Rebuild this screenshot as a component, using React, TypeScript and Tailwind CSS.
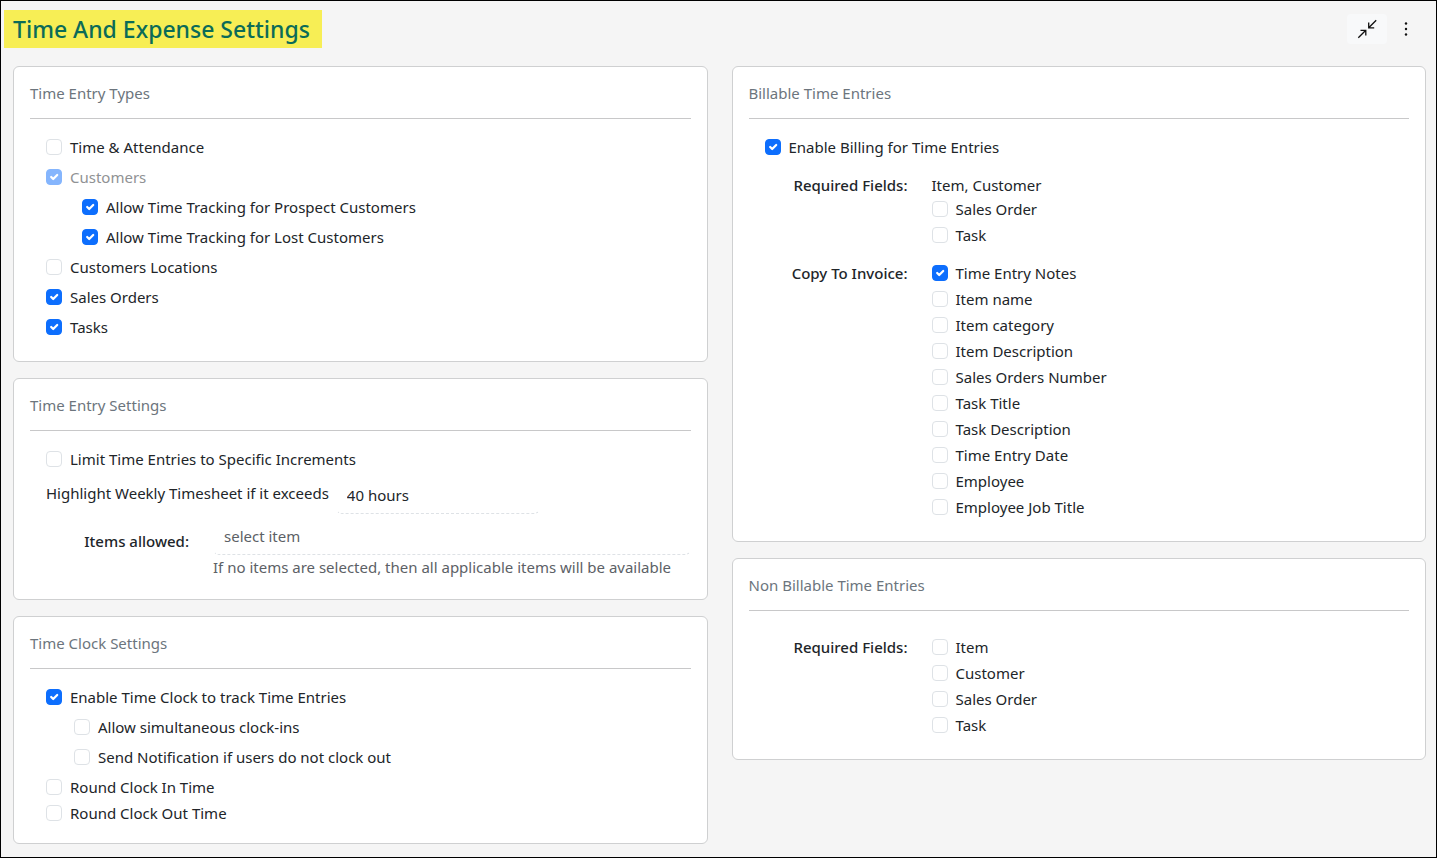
import React from "react";
import { clsx } from "clsx";

interface CheckProps {
  label: string;
  checked?: boolean;
  disabled?: boolean;
  className?: string;
}

const Check = ({ label, checked = false, disabled = false, className }: CheckProps) => {
  const [on, setOn] = React.useState(checked);

  return (
    <label
      className={clsx(
        "flex h-6 items-center gap-2",
        disabled && "text-[#909294]",
        className
      )}
    >
      <span className={clsx("relative flex shrink-0", disabled && "opacity-50")}>
        <input
          type="checkbox"
          checked={on}
          disabled={disabled}
          onChange={() => setOn(!on)}
          className="size-4 appearance-none rounded border border-[#dee2e6] bg-white checked:border-[#0d6efd] checked:bg-[#0d6efd]"
        />
        {on && (
          <svg viewBox="0 0 20 20" className="pointer-events-none absolute inset-0 size-4" aria-hidden="true">
            <path
              d="M6.5 10l2.5 2.5 5-5"
              fill="none"
              stroke="#fff"
              strokeWidth="2.8"
              strokeLinecap="round"
              strokeLinejoin="round"
            />
          </svg>
        )}
      </span>
      {label}
    </label>
  );
};

interface CardProps {
  title: string;
  children: React.ReactNode;
}

const Card = ({ title, children }: CardProps) => (
  <section className="rounded-md border border-[#cfd0d1] bg-white px-4 pb-[18px]">
    <h2 className="border-b border-[#c8c8c9] pt-3.5 pb-[13px] text-[#6c757d]">{title}</h2>
    <div className="px-4 pt-4">{children}</div>
  </section>
);

interface FieldGroupProps {
  label: string;
  children: React.ReactNode;
  className?: string;
}

const FieldGroup = ({ label, children, className }: FieldGroupProps) => (
  <div role="group" aria-label={label} className={clsx("flex gap-6", className)}>
    <div className="w-[143px] shrink-0 text-right font-medium">{label}</div>
    <div className="flex flex-col gap-0.5">{children}</div>
  </div>
);

const invoiceFields = [
  "Item name",
  "Item category",
  "Item Description",
  "Sales Orders Number",
  "Task Title",
  "Task Description",
  "Time Entry Date",
  "Employee",
  "Employee Job Title",
];

export default function App() {
  return (
    <div className="min-h-screen border border-black bg-[#f5f5f5] font-['Noto_Sans',sans-serif] text-[15px] leading-6 text-[#212529]">
      <header className="flex items-center justify-between pt-[9px] pr-5 pb-[18px] pl-[3px]">
        <h1 className="bg-[#f7ee55] pr-3 pl-[9px] text-[23px] leading-[38px] font-medium text-[#0b6b58]">
          Time And Expense Settings
        </h1>
        <div className="flex items-center gap-[9px]">
          <button
            type="button"
            aria-label="Collapse"
            className="flex h-[30px] w-10 items-center justify-center rounded bg-[#f8f9fa]"
          >
            <svg viewBox="0 0 20 20" className="size-5" fill="none" stroke="#111" strokeWidth="1.3" aria-hidden="true">
              <path d="M19.2 1.3l-7.5 7.5M11.7 3.5v5.3h5.5" />
              <path d="M1.3 18.8l7.5-7.5M3.5 11.3h5.3v5.3" />
            </svg>
          </button>
          <button type="button" aria-label="More options" className="flex h-[30px] w-5 items-center justify-center">
            <svg viewBox="0 0 16 16" className="size-4" fill="#111" aria-hidden="true">
              <circle cx="8" cy="2.5" r="1.2" />
              <circle cx="8" cy="8" r="1.2" />
              <circle cx="8" cy="13.5" r="1.2" />
            </svg>
          </button>
        </div>
      </header>

      <main className="grid grid-cols-2 items-start gap-6 pr-2.5 pb-3 pl-3">
        <div className="flex flex-col gap-4">
          <Card title="Time Entry Types">
            <div className="flex flex-col gap-1.5 pb-1">
              <Check label="Time & Attendance" />
              <Check label="Customers" checked disabled />
              <Check label="Allow Time Tracking for Prospect Customers" checked className="ml-9" />
              <Check label="Allow Time Tracking for Lost Customers" checked className="ml-9" />
              <Check label="Customers Locations" />
              <Check label="Sales Orders" checked />
              <Check label="Tasks" checked />
            </div>
          </Card>

          <Card title="Time Entry Settings">
            <Check label="Limit Time Entries to Specific Increments" />
            <div className="mt-[5px] flex items-center gap-[7px]">
              <label htmlFor="weekly" className="pb-1">
                Highlight Weekly Timesheet if it exceeds
              </label>
              <input
                id="weekly"
                defaultValue="40 hours"
                className="h-[38px] w-[204px] rounded-md border border-transparent border-b-[#dee2e6] px-2.5 [border-bottom-style:dashed]"
              />
            </div>
            <div className="mt-[3px] flex gap-6 pb-0.5">
              <label htmlFor="items" className="w-[143px] shrink-0 pt-3 text-right font-medium">
                Items allowed:
              </label>
              <div className="-mr-4 flex-1 text-[#5c6166]">
                <input
                  id="items"
                  placeholder="select item"
                  className="block h-[38px] w-full rounded-md border border-transparent border-b-[#dee2e6] px-2.5 [border-bottom-style:dashed] placeholder:text-[#5c6166]"
                />
                <p>If no items are selected, then all applicable items will be available</p>
              </div>
            </div>
          </Card>

          <Card title="Time Clock Settings">
            <div className="flex flex-col gap-1.5">
              <Check label="Enable Time Clock to track Time Entries" checked />
              <Check label="Allow simultaneous clock-ins" className="ml-7" />
              <Check label="Send Notification if users do not clock out" className="ml-7" />
              <div className="flex flex-col gap-0.5">
                <Check label="Round Clock In Time" />
                <Check label="Round Clock Out Time" />
              </div>
            </div>
          </Card>
        </div>

        <div className="flex flex-col gap-4">
          <Card title="Billable Time Entries">
            <Check label="Enable Billing for Time Entries" checked />
            <FieldGroup label="Required Fields:" className="mt-3.5">
              <div>
                <p>Item, Customer</p>
                <Check label="Sales Order" />
              </div>
              <Check label="Task" />
            </FieldGroup>
            <FieldGroup label="Copy To Invoice:" className="mt-3.5 pb-1">
              <Check label="Time Entry Notes" checked />
              {invoiceFields.map((field) => (
                <Check key={field} label={field} />
              ))}
            </FieldGroup>
          </Card>

          <Card title="Non Billable Time Entries">
            <FieldGroup label="Required Fields:" className="pt-2 pb-1">
              <Check label="Item" />
              <Check label="Customer" />
              <Check label="Sales Order" />
              <Check label="Task" />
            </FieldGroup>
          </Card>
        </div>
      </main>
    </div>
  );
}
